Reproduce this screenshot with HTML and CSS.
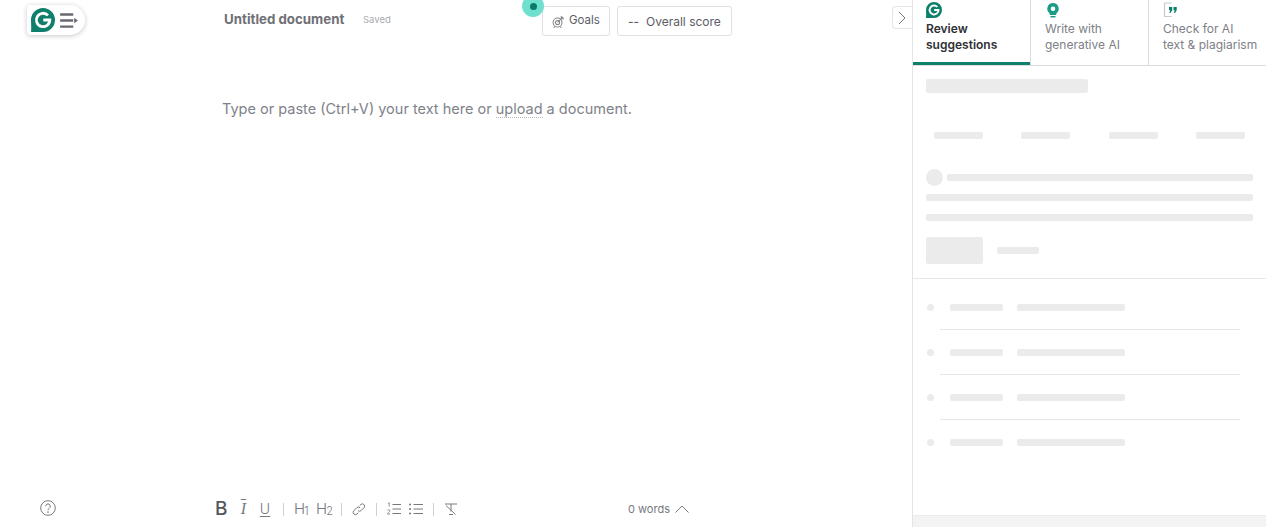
FILE: index.html
```html
<!DOCTYPE html>
<html lang="en">
<head>
<meta charset="utf-8">
<title>Untitled document</title>
<link rel="stylesheet" href="styles.css">
</head>
<body>
<div class="app">
  <main class="main">
    <header class="top">
      <div class="logo-pill">
        <svg class="logo" viewBox="0 0 24 24"><path class="g-bg" d="M12 0a12 12 0 0 1 0 24H0c.6-3 0-8 0-12A12 12 0 0 1 12 0z"/><path class="g-fg" d="M17 7.400A6.700 6.700 0 1 0 18.800 12H12.300"/></svg>
        <svg class="menu" viewBox="0 0 20 16"><path d="M0 1.500h14M0 8h14M0 14.500h14"/><path class="menu-arrow" d="M15 5l4 3-4 3z"/></svg>
      </div>
      <div class="title">Untitled document</div>
      <div class="saved">Saved</div>
      <div class="actions">
        <span class="pulse"><span class="pulse-dot"></span></span>
        <button class="btn btn-goals">
          <svg class="goal-icon" viewBox="0 0 14 14"><circle cx="6" cy="8" r="4.800"/><circle cx="6" cy="8" r="2.200"/><path d="M6 8l6-6M10 1v3h3M3 12.500l-1 1.300M9 12.500l1 1.300"/></svg>
          Goals
        </button>
        <button class="btn btn-score"><span class="dashes">--</span>Overall score</button>
      </div>
    </header>
    <div class="editor">
      <p class="placeholder">Type or paste (Ctrl+V) your text here or <span class="upload">upload</span> a document.</p>
    </div>
    <footer class="bottom">
      <svg class="help" viewBox="0 0 16 16"><circle cx="8" cy="8" r="7.300"/><path d="M5.700 6.200a2.300 2.300 0 1 1 3.500 2c-.8.500-1.200 1-1.200 1.900"/><circle class="help-dot" cx="8" cy="12.100" r=".8"/></svg>
      <div class="toolbar">
        <span class="t t-b">B</span>
        <span class="t t-i">I</span>
        <span class="t t-u">U</span>
        <span class="sep"></span>
        <span class="t t-h">H<small>1</small></span>
        <span class="t t-h t-h2">H<small>2</small></span>
        <span class="sep"></span>
        <svg class="ic" viewBox="0 0 14 14"><path d="M6 8.500a2.200 2.200 0 0 0 3.200 0l3-3a2.300 2.300 0 0 0-3.200-3.200L7.700 3.600M8 5.700a2.200 2.200 0 0 0-3.200 0l-3 3A2.300 2.300 0 0 0 5 12l1.300-1.300"/></svg>
        <span class="sep"></span>
        <svg class="ic" viewBox="0 0 14 14"><path d="M5.500 2.500H14M5.500 7H14M5.500 11.500H14"/><path d="M1 1.500l1.200-.8v3.800M.5 8.500c.3-1 2.500-1 2.500.3 0 1-2.500 1.700-2.500 3.200H3.300" class="thin"/></svg>
        <svg class="ic ic-ul" viewBox="0 0 14 14"><path d="M4.500 2.500H14M4.500 7H14M4.500 11.500H14"/><path class="dots" d="M1 2.500h.01M1 7h.01M1 11.500h.01"/></svg>
        <span class="sep"></span>
        <svg class="ic" viewBox="0 0 14 14"><path d="M1 2h12M7 2v7.500M5 12.500h4M2 3.500l9.500 9"/></svg>
      </div>
      <div class="words">0 words
        <svg class="chev" viewBox="0 0 14 8"><path d="M.5 7.500L7 1l6.500 6.500"/></svg>
      </div>
    </footer>
    <button class="collapse" aria-label="Collapse">
      <svg viewBox="0 0 8 14"><path d="M1 1l6 6-6 6"/></svg>
    </button>
  </main>
  <aside class="side">
    <nav class="tabs">
      <div class="tab tab-on">
        <svg class="tab-ic" viewBox="0 0 24 24"><path class="g-bg" d="M12 0a12 12 0 0 1 0 24H0c.6-3 0-8 0-12A12 12 0 0 1 12 0z"/><path class="g-fg" d="M17 7.400A6.700 6.700 0 1 0 18.800 12H12.300"/></svg>
        <span>Review<br>suggestions</span>
      </div>
      <div class="tab tab-write">
        <svg class="tab-ic" viewBox="0 0 16 16"><path class="g-bulb" d="M8 1a5.800 5.800 0 0 1 3.300 10.500V13H4.700v-1.500A5.800 5.800 0 0 1 8 1z"/><circle cx="8" cy="6.800" r="2.300" fill="#fff"/><path class="g-bulb" d="M5.500 14h5v1.500h-5z"/></svg>
        <span>Write with<br>generative AI</span>
      </div>
      <div class="tab tab-check">
        <svg class="tab-ic" viewBox="0 0 16 16"><path class="doc" d="M1.500 1h7M1.500 1v13.500h7"/><path class="g-bg" d="M6 5h3.200v3.200L7.500 11H6.300l1-2.800H6zM10.500 5h3.200v3.200L12 11h-1.200l1-2.800h-1.300z"/></svg>
        <span>Check for AI<br>text &amp; plagiarism</span>
      </div>
    </nav>
    <section class="card">
      <div class="sk sk-title"></div>
      <div class="sk-scores">
        <div class="sk sk-score"></div><div class="sk sk-score"></div><div class="sk sk-score"></div><div class="sk sk-score"></div>
      </div>
      <div class="sk-head"><div class="sk-circle"></div><div class="sk sk-line"></div></div>
      <div class="sk sk-line sk-l2"></div>
      <div class="sk sk-line sk-l3"></div>
      <div class="sk-cta"><div class="sk sk-btn"></div><div class="sk sk-link"></div></div>
    </section>
    <section class="list">
      <div class="row"><div class="sk-dot"></div><div class="sk sk-a"></div><div class="sk sk-b"></div></div>
      <div class="row"><div class="sk-dot"></div><div class="sk sk-a"></div><div class="sk sk-b"></div></div>
      <div class="row"><div class="sk-dot"></div><div class="sk sk-a"></div><div class="sk sk-b"></div></div>
      <div class="row"><div class="sk-dot"></div><div class="sk sk-a"></div><div class="sk sk-b"></div></div>
    </section>
    <div class="side-foot"></div>
  </aside>
</div>
</body>
</html>
```
FILE: styles.css
```css
* { box-sizing: border-box; }
html, body { margin: 0; background: #fff; overflow: hidden; }
body { font-family: Inter, "Liberation Sans", sans-serif; color: #6d6f7a; }

.app { display: flex; width: 1266px; height: 527px; }

.main { position: relative; width: 912px; display: flex; flex-direction: column; }

.top { display: flex; align-items: flex-start; height: 96px; padding: 5px 0 0 27px; }
.logo-pill { width: 58px; height: 30px; display: flex; align-items: center; gap: 5px; padding-left: 4px; background: #fff; border-radius: 4px 15px 15px 4px; box-shadow: 0 1px 5px rgba(0,0,0,.22); }
.logo { width: 24px; height: 24px; flex: none; }
.g-bg { fill: #0d7f6a; stroke: none; }
.g-bulb { fill: #1a9c85; stroke: none; }
.g-fg { fill: none; stroke: #fff; stroke-width: 2.800; }
.menu { width: 19px; height: 15px; flex: none; }
.menu path { fill: none; stroke: #676a70; stroke-width: 2.600; }
.menu .menu-arrow { fill: #676a70; stroke: none; }

.title { margin: 6px 0 0 139px; width: 139px; font-size: 13.300px; line-height: 17px; font-weight: 700; color: #6f7076; white-space: nowrap; }
.saved { margin: 8px 0 0 0; width: 179px; font-size: 9.500px; line-height: 13px; color: #a9abb0; }

.actions { display: flex; gap: 7px; margin-top: 1px; position: relative; }
.pulse { position: absolute; left: -20px; top: -11px; width: 22px; height: 22px; border-radius: 50%; background: #6fe0cd; display: flex; align-items: center; justify-content: center; }
.pulse-dot { width: 7px; height: 7px; border-radius: 50%; background: #0a7a68; }
.btn { height: 30px; background: #fff; border: 1px solid #dfe0e2; border-radius: 3px; font: 12px/16px Inter, "Liberation Sans", sans-serif; color: #5b5d66; display: flex; align-items: center; padding: 0; }
.btn-goals { width: 68px; padding: 0 0 2px 9px; gap: 4px; font-size: 11.500px; }
.goal-icon { width: 13px; height: 13px; margin-top: 3px; }
.goal-icon circle, .goal-icon path { fill: none; stroke: #808285; stroke-width: 1.100; }
.btn-score { width: 115px; padding: 1px 0 0 10px; }
.dashes { width: 18px; text-align: left; font-weight: 500; }

.editor { flex: 1; padding-left: 222px; }
.placeholder { margin: 0; font-size: 14.500px; line-height: 25px; color: #80828a; white-space: nowrap; }
.upload { border-bottom: 1px dotted #b5b7bc; }

.bottom { height: 27px; display: flex; align-items: flex-start; padding-left: 40px; }
.help { width: 16px; height: 16px; flex: none; }
.help circle, .help path { fill: none; stroke: #77797f; stroke-width: 1; }
.help .help-dot { fill: #77797f; stroke: none; }

.toolbar { width: 396px; margin: 1px 0 0 159px; height: 16px; display: flex; align-items: center; gap: 10px; color: #6c6e74; }
.t { display: block; line-height: 16px; white-space: nowrap; }
.t-b { width: 12px; margin-right: 1px; font: 500 19px/16px Inter, sans-serif; color: #55575c; }
.t-i { width: 11px; text-align: center; font: italic 16px/16px "Liberation Serif", serif; color: #77797f; text-decoration: overline; text-decoration-thickness: 1px; }
.t-u { width: 12px; margin-right: 2px; text-align: center; font: 300 14px/16px Inter, sans-serif; text-decoration: underline; text-underline-offset: 2px; text-decoration-thickness: 1px; color: #77797f; }
.t-h { width: 15px; font: 300 15px/16px Inter, sans-serif; color: #77797f; letter-spacing: -.8px; }
.t-h small { font-size: 11px; position: relative; top: 1px; }
.t-h2 { margin-left: -3px; }
.sep { width: 1px; height: 13px; background: #cfd0d3; flex: none; }
.ic { width: 14px; height: 14px; flex: none; }
.ic-ul { margin-left: -2px; }
.ic path { fill: none; stroke: #77797f; stroke-width: 1; }
.ic .thin { stroke-width: .8; }
.ic .dots { stroke-width: 2; stroke-linecap: round; }

.words { display: flex; align-items: center; gap: 5px; font-size: 11px; line-height: 16px; color: #77797f; margin: 1px 0 0 17px; }
.chev { width: 14px; height: 8px; }
.chev path { fill: none; stroke: #77797f; stroke-width: 1; }

.collapse { position: absolute; right: 0; top: 6px; width: 20px; height: 23px; padding: 0 0 0 5px; display: flex; align-items: center; background: #fff; border: 1px solid #e6e6e8; border-right: 0; border-radius: 4px 0 0 4px; }
.collapse svg { width: 8px; height: 14px; }
.collapse path { fill: none; stroke: #77797f; stroke-width: 1; }

.side { width: 354px; border-left: 1px solid #e4e4e4; display: flex; flex-direction: column; }
.tabs { display: flex; height: 66px; border-bottom: 1px solid #dcdcdc; flex: none; }
.tab { width: 118px; padding: 2px 0 0 14px; font-size: 12px; line-height: 16px; color: #7e8087; border-left: 1px solid #dcdcdc; white-space: nowrap; }
.tab span { display: block; margin-top: 3px; }
.tab-on { width: 117px; padding-left: 13px; border-left: 0; color: #2f3136; font-weight: 600; border-bottom: 3px solid #0d7f6a; height: 65px; }
.tab-ic { display: block; width: 16px; height: 16px; }
.tab-check { width: 118px; }
.doc { fill: none; stroke: #c8c9cc; stroke-width: 1.200; }

.sk { background: #ebebeb; border-radius: 2px; }
.card { height: 213px; padding: 13px 13px 0; border-bottom: 1px solid #e8e8e8; flex: none; }
.sk-title { width: 162px; height: 14px; }
.sk-scores { display: flex; justify-content: space-between; padding: 0 8px; margin-top: 39px; }
.sk-score { width: 49px; height: 7px; }
.sk-head { display: flex; align-items: center; gap: 4px; margin-top: 30px; }
.sk-circle { width: 17px; height: 17px; border-radius: 50%; background: #ebebeb; flex: none; }
.sk-line { flex: 1; height: 7px; }
.sk-l2 { margin-top: 8px; }
.sk-l3 { margin-top: 13px; }
.sk-cta { display: flex; align-items: center; gap: 14px; margin-top: 16px; }
.sk-btn { width: 57px; height: 27px; }
.sk-link { width: 42px; height: 7px; }

.list { flex: 1; padding-top: 6px; }
.row { position: relative; height: 45px; display: flex; align-items: center; padding-left: 14px; }
.row + .row::before { content: ""; position: absolute; left: 27px; top: -1px; width: 300px; height: 1px; background: #e6e6e6; }
.sk-dot { width: 7px; height: 7px; border-radius: 50%; background: #ebebeb; flex: none; }
.sk-a { width: 53px; height: 7px; margin-left: 16px; }
.sk-b { width: 108px; height: 7px; margin-left: 14px; }

.side-foot { height: 12px; flex: none; background: #f3f3f3; border-top: 1px solid #ebebeb; }
```
